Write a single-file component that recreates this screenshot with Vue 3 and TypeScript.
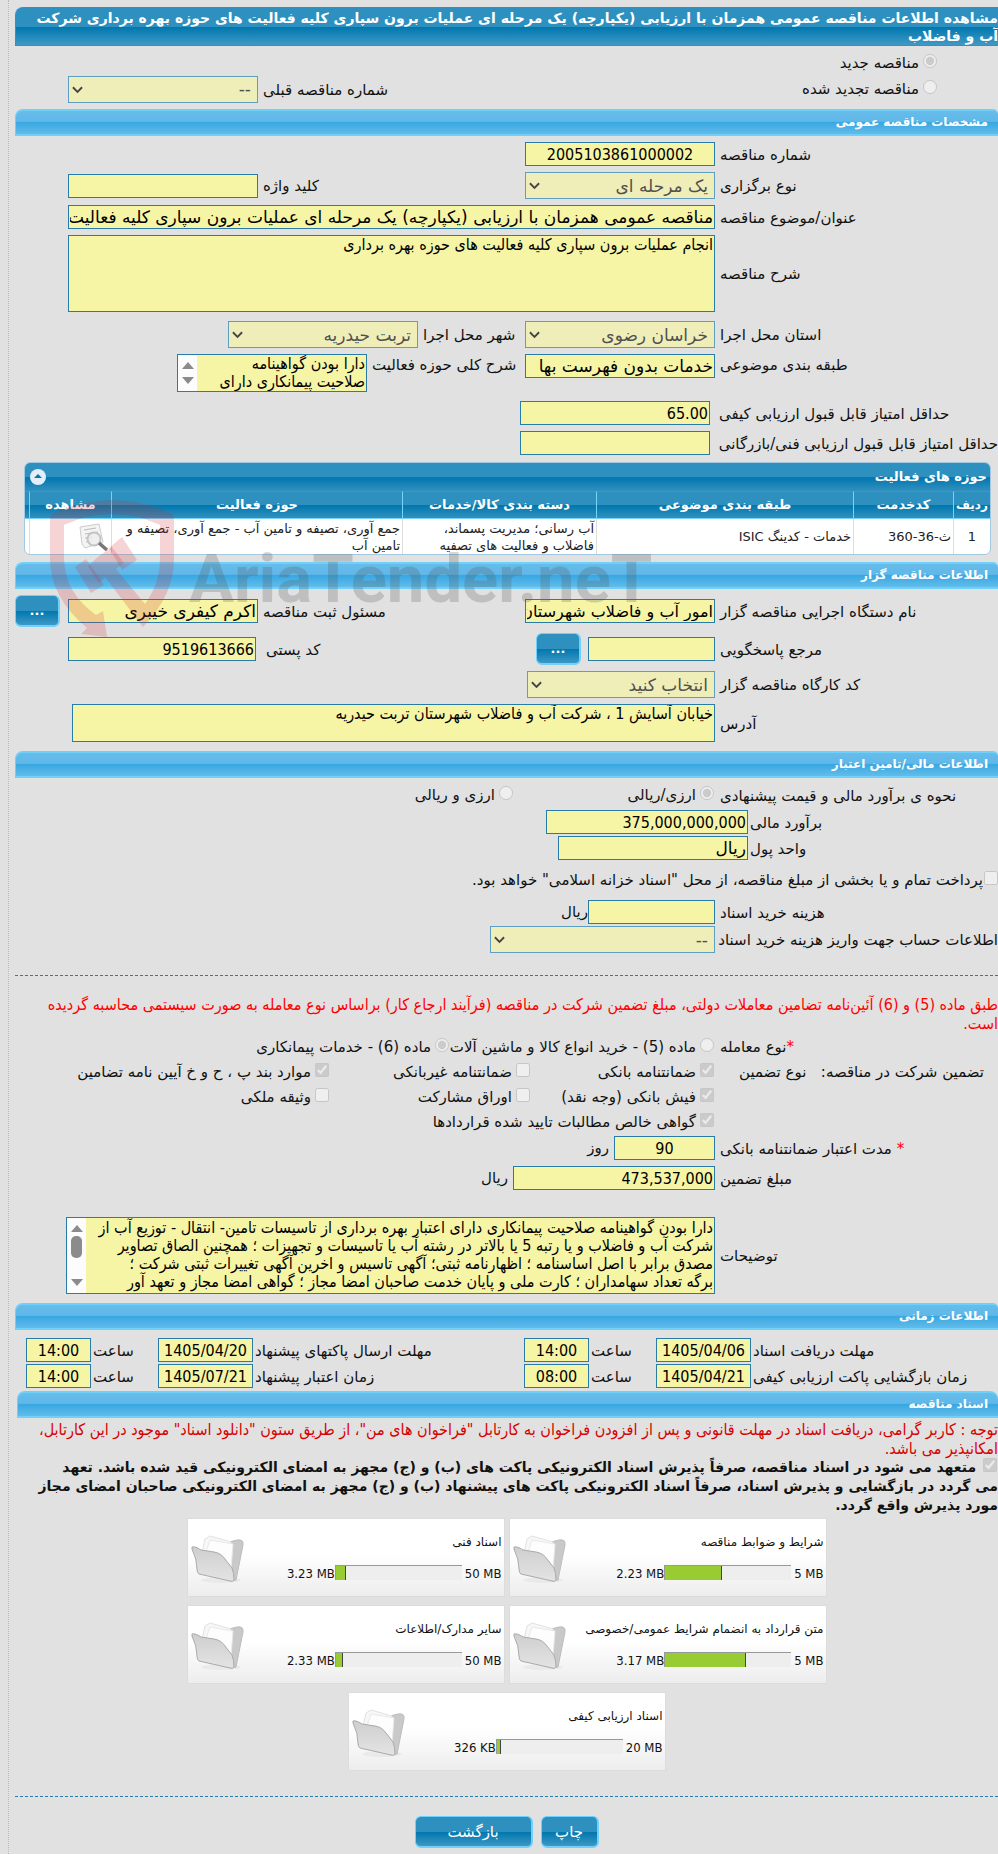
<script setup lang="ts">
interface Doc {
  title: string
  limit: string
  used: string
  percent: number
}

const docs: Doc[] = [
  { title: 'شرایط و ضوابط مناقصه', limit: '5 MB', used: '2.23 MB', percent: 45 },
  { title: 'اسناد فنی', limit: '50 MB', used: '3.23 MB', percent: 8 },
  { title: 'متن قرارداد به انضمام شرایط عمومی/خصوصی', limit: '5 MB', used: '3.17 MB', percent: 64 },
  { title: 'سایر مدارک/اطلاعات', limit: '50 MB', used: '2.33 MB', percent: 6 },
  { title: 'اسناد ارزیابی کیفی', limit: '20 MB', used: '326 KB', percent: 3 },
]

const deadlines = [
  [
    { id: 'd1', label: 'مهلت دریافت اسناد', date: '1405/04/06', time: '14:00' },
    { id: 'd2', label: 'مهلت ارسال پاکتهای پیشنهاد', date: '1405/04/20', time: '14:00' },
  ],
  [
    { id: 'd3', label: 'زمان بازگشایی پاکت ارزیابی کیفی', date: '1405/04/21', time: '08:00' },
    { id: 'd4', label: 'زمان اعتبار پیشنهاد', date: '1405/07/21', time: '14:00' },
  ],
]

const scope = 'دارا بودن گواهینامه\nصلاحیت پیمانکاری دارای'

const remarks = [
  'دارا بودن گواهینامه صلاحیت پیمانکاری دارای اعتبار بهره برداری از تاسیسات تامین- انتقال - توزیع آب از',
  'شرکت آب و فاضلاب و یا رتبه 5 یا بالاتر در رشته آب یا تاسیسات و تجهیزات ؛ همچنین الصاق تصاویر',
  'مصدق برابر با اصل اساسنامه ؛ اظهارنامه ثبتی؛ آگهی تاسیس و اخرین آگهی تغییرات ثبتی شرکت ؛',
  'برگه تعداد سهامداران ؛ کارت ملی و پایان خدمت صاحبان امضا مجاز ؛ گواهی امضا مجاز و تعهد آور',
].join('\n')
</script>

<template>
  <main class="page" dir="rtl" lang="fa">
    <h1 class="bar bar-dark">
      مشاهده اطلاعات مناقصه عمومی همزمان با ارزیابی (یکپارچه) یک مرحله ای عملیات برون سپاری کلیه فعالیت های حوزه بهره برداری شرکت<br />آب و فاضلاب
    </h1>

    <section class="kind">
      <div class="row"><label class="opt"><input type="radio" name="kind" checked disabled />مناقصه جدید</label></div>
      <div class="row">
        <label class="opt kind-opt"><input type="radio" name="kind" disabled />مناقصه تجدید شده</label>
        <label class="lbl grow" for="prev">شماره مناقصه قبلی</label>
        <span class="sel w190"><select id="prev" disabled><option>--</option></select><svg viewBox="0 0 12 8"><path d="M1 1l5 5 5-5" /></svg></span>
      </div>
    </section>

    <h2 class="bar">مشخصات مناقصه عمومی</h2>
    <section class="form">
      <div class="row">
        <label class="lbl main" for="num">شماره مناقصه</label>
        <input id="num" class="w190 center num" value="2005103861000002" readonly />
      </div>
      <div class="row">
        <label class="lbl main" for="hold">نوع برگزاری</label>
        <span class="sel w190"><select id="hold" disabled><option>یک مرحله ای</option></select><svg viewBox="0 0 12 8"><path d="M1 1l5 5 5-5" /></svg></span>
        <label class="lbl grow" for="key">کلید واژه</label>
        <input id="key" class="w190" readonly />
      </div>
      <div class="row">
        <label class="lbl main" for="title">عنوان/موضوع مناقصه</label>
        <input id="title" class="grow" value="مناقصه عمومی همزمان با ارزیابی (یکپارچه) یک مرحله ای عملیات برون سپاری کلیه فعالیت های حوزه بهره برداری" readonly />
      </div>
      <div class="row">
        <label class="lbl main" for="desc">شرح مناقصه</label>
        <textarea id="desc" class="grow tall" readonly>انجام عملیات برون سپاری کلیه فعالیت های حوزه بهره برداری</textarea>
      </div>
      <div class="row apart">
        <label class="lbl main" for="prov">استان محل اجرا</label>
        <span class="sel w190"><select id="prov" disabled><option>خراسان رضوی</option></select><svg viewBox="0 0 12 8"><path d="M1 1l5 5 5-5" /></svg></span>
        <label class="lbl w107" for="city">شهر محل اجرا</label>
        <span class="sel w190"><select id="city" disabled><option>تربت حیدریه</option></select><svg viewBox="0 0 12 8"><path d="M1 1l5 5 5-5" /></svg></span>
      </div>
      <div class="row top">
        <label class="lbl main" for="cat">طبقه بندی موضوعی</label>
        <input id="cat" class="w190" value="خدمات بدون فهرست بها" readonly />
        <label class="lbl w158" for="scope">شرح کلی حوزه فعالیت</label>
        <div class="scroll w190">
          <textarea id="scope" class="short" :value="scope" readonly></textarea>
          <span class="track"><i class="up"></i><i class="down"></i></span>
        </div>
      </div>
      <div class="row apart">
        <label class="lbl wide" for="minq">حداقل امتیاز قابل قبول ارزیابی کیفی</label>
        <input id="minq" class="w190 num" value="65.00" readonly />
      </div>
      <div class="row">
        <label class="lbl wide" for="mint">حداقل امتیاز قابل قبول ارزیابی فنی/بازرگانی</label>
        <input id="mint" class="w190" readonly />
      </div>
    </section>

    <div class="activity">
      <div class="panel">
        <div class="panel-head">
          <span>حوزه های فعالیت</span>
          <button type="button" class="fold" aria-label="بستن"><svg viewBox="0 0 16 16"><path d="M4 9l4-4 4 4z" /></svg></button>
        </div>
        <table>
          <colgroup><col class="c1" /><col class="c2" /><col class="c3" /><col class="c4" /><col class="c5" /><col class="c6" /><col class="c7" /></colgroup>
          <thead>
            <tr><th>ردیف</th><th>کدخدمت</th><th>طبقه بندی موضوعی</th><th>دسته بندی کالا/خدمات</th><th>حوزه فعالیت</th><th>مشاهده</th><th></th></tr>
          </thead>
          <tbody>
            <tr>
              <td class="mid">1</td>
              <td>ث-36-360</td>
              <td>خدمات - کدینگ ISIC</td>
              <td>آب رسانی؛ مدیریت پسماند،<br />فاضلاب و فعالیت های تصفیه</td>
              <td>جمع آوری، تصیفه و تامین آب - جمع آوری، تصیفه و<br />تامین آب</td>
              <td>
                <svg class="view" viewBox="0 0 30 28">
                  <path d="M1 4l19-3 4 18-18 6-3-4z" fill="#f4f4f4" stroke="#ccc" />
                  <path d="M5 7l12-2M6 11l13-2M6 15l8-1M7 19l6-1" stroke="#bbb" fill="none" />
                  <circle cx="15" cy="16" r="6.500" fill="#eee" fill-opacity=".8" stroke="#c4c4c4" stroke-width="2" />
                  <path d="M20 20l8 7" stroke="#777" stroke-width="3.500" />
                </svg>
              </td>
              <td></td>
            </tr>
          </tbody>
        </table>
      </div>
      <svg class="mark" viewBox="0 0 610 146" aria-hidden="true">
        <g fill="#d2282d" fill-opacity=".2">
          <path fill-rule="evenodd" d="M0 16Q62-14 124 16V60Q124 96 93 128L55 78L49 84L38 67L49 57L62 48L74 64L66 70L95 105Q110 84 110 60V26Q62 4 14 26V60Q15 94 46 116L53 112L57 138L31 135L37 129Q0 98 0 60Z" />
          <path d="M25 68L36 60L54 86L41 94ZM59 49L72 38L87 61L72 71Z" />
        </g>
        <text x="139" y="103">AriaTender.neT</text>
      </svg>
    </div>

    <h2 class="bar">اطلاعات مناقصه گزار</h2>
    <section class="form owner">
      <div class="row h32">
        <label class="lbl main" for="org">نام دستگاه اجرایی مناقصه گزار</label>
        <input id="org" class="w190 fit" value="امور آب و فاضلاب شهرستان تربت حیدریه" readonly />
        <label class="lbl grow" for="reg">مسئول ثبت مناقصه</label>
        <input id="reg" class="w190" value="اکرم کیفری خیبری" readonly />
        <button type="button" class="btn dots side">...</button>
      </div>
      <div class="row h32">
        <label class="lbl main" for="ref">مرجع پاسخگویی</label>
        <input id="ref" class="w127" readonly />
        <button type="button" class="btn dots">...</button>
        <label class="lbl grow zip" for="zip">کد پستی</label>
        <input id="zip" class="w188 num" value="9519613666" readonly />
        <span class="side"></span>
      </div>
      <div class="row indent">
        <label class="lbl main" for="work">کد کارگاه مناقصه گزار</label>
        <span class="sel w188"><select id="work" disabled><option>انتخاب کنید</option></select><svg viewBox="0 0 12 8"><path d="M1 1l5 5 5-5" /></svg></span>
      </div>
      <div class="row indent">
        <label class="lbl main" for="addr">آدرس</label>
        <textarea id="addr" class="grow short" readonly>خیابان آسایش 1 ، شرکت آب و فاضلاب شهرستان تربت حیدریه</textarea>
      </div>
    </section>

    <h2 class="bar spaced">اطلاعات مالی/تامین اعتبار</h2>
    <section class="form tight">
      <div class="row h26">
        <span class="lbl main">نحوه ی برآورد مالی و قیمت پیشنهادی</span>
        <label class="opt w201"><input type="radio" name="cur" checked disabled />ارزی/ریالی</label>
        <label class="opt"><input type="radio" name="cur" disabled />ارزی و ریالی</label>
      </div>
      <div class="row">
        <label class="lbl money" for="est">برآورد مالی</label>
        <input id="est" class="w202 num" value="375,000,000,000" readonly />
      </div>
      <div class="row">
        <label class="lbl money" for="unit">واحد پول</label>
        <input id="unit" class="w190" value="ریال" readonly />
      </div>
      <div class="row pay">
        <label class="opt"><input type="checkbox" disabled />پرداخت تمام و یا بخشی از مبلغ مناقصه، از محل "اسناد خزانه اسلامی" خواهد بود.</label>
      </div>
      <div class="row">
        <label class="lbl main" for="cost">هزینه خرید اسناد</label>
        <input id="cost" class="w127" readonly /><span>ریال</span>
      </div>
      <div class="row">
        <label class="lbl main" for="acc">اطلاعات حساب جهت واریز هزینه خرید اسناد</label>
        <span class="sel w225"><select id="acc" disabled><option>--</option></select><svg viewBox="0 0 12 8"><path d="M1 1l5 5 5-5" /></svg></span>
      </div>
    </section>

    <hr />
    <p class="note">
      طبق ماده (5) و (6) آئین‌نامه تضامین معاملات دولتی، مبلغ تضمین شرکت در مناقصه (فرآیند ارجاع کار) براساس نوع معامله به صورت سیستمی محاسبه گردیده<br />است.
    </p>

    <section class="options">
      <div class="row h25">
        <span class="lbl main"><b class="req">*</b>نوع معامله</span>
        <label class="opt w265"><input type="radio" name="deal" disabled />ماده (5) - خرید انواع کالا و ماشین آلات</label>
        <label class="opt"><input type="radio" name="deal" checked disabled />ماده (6) - خدمات پیمانکاری</label>
      </div>
      <div class="row h25">
        <span class="lbl main pair"><span>تضمین شرکت در مناقصه:</span><span>نوع تضمین</span></span>
        <label class="opt w184"><input type="checkbox" checked disabled />ضمانتنامه بانکی</label>
        <label class="opt w201"><input type="checkbox" disabled />ضمانتنامه غیربانکی</label>
        <label class="opt"><input type="checkbox" checked disabled />موارد بند پ ، ح و خ آیین نامه تضامین</label>
      </div>
      <div class="row h25">
        <span class="lbl main"></span>
        <label class="opt w184"><input type="checkbox" checked disabled />فیش بانکی (وجه نقد)</label>
        <label class="opt w201"><input type="checkbox" disabled />اوراق مشارکت</label>
        <label class="opt"><input type="checkbox" disabled />وثیقه ملکی</label>
      </div>
      <div class="row h25">
        <span class="lbl main"></span>
        <label class="opt"><input type="checkbox" checked disabled />گواهی خالص مطالبات تایید شده قراردادها</label>
      </div>
    </section>
    <section class="form guarantee">
      <div class="row">
        <label class="lbl main" for="days"><b class="req">*</b> مدت اعتبار ضمانتنامه بانکی</label>
        <input id="days" class="w101 center num" value="90" readonly /><span class="unit">روز</span>
      </div>
      <div class="row">
        <label class="lbl main" for="sum">مبلغ تضمین</label>
        <input id="sum" class="w202 num" value="473,537,000" readonly /><span class="unit">ریال</span>
      </div>
      <div class="row remarks">
        <label class="lbl main" for="rem">توضیحات</label>
        <div class="scroll grow">
          <textarea id="rem" class="tall" :value="remarks" readonly></textarea>
          <span class="track"><i class="up"></i><i class="thumb"></i><i class="down"></i></span>
        </div>
      </div>
    </section>

    <h2 class="bar spaced">اطلاعات زمانی</h2>
    <section class="times">
      <div v-for="(line, i) in deadlines" :key="i" class="row">
        <template v-for="(d, j) in line" :key="d.id">
          <label class="lbl" :class="j ? 'grow near' : 'date'" :for="d.id">{{ d.label }}</label>
          <input :id="d.id" class="w95 center num" :value="d.date" readonly />
          <label class="lbl hour" :for="d.id + 't'">ساعت</label>
          <input :id="d.id + 't'" class="w65 center num" :value="d.time" readonly />
        </template>
      </div>
    </section>

    <h2 class="bar docs-bar">اسناد مناقصه</h2>
    <p class="note second">
      توجه : کاربر گرامی، دریافت اسناد در مهلت قانونی و پس از افزودن فراخوان به کارتابل "فراخوان های من"، از طریق ستون "دانلود اسناد" موجود در این کارتابل،<br />امکانپذیر می باشد.
    </p>
    <label class="pledge">
      <input type="checkbox" checked disabled />
      متعهد می شود در اسناد مناقصه، صرفاً پذیرش اسناد الکترونیکی پاکت های (ب) و (ج) مجهز به امضای الکترونیکی قید شده باشد. تعهد<br />می گردد در بازگشایی و پذیرش اسناد، صرفاً اسناد الکترونیکی پاکت های پیشنهاد (ب) و (ج) مجهز به امضای الکترونیکی صاحبان امضای مجاز<br />مورد پذیرش واقع گردد.
    </label>

    <section class="cards">
      <article v-for="d in docs" :key="d.title" class="card">
        <h3>{{ d.title }}</h3>
        <div class="usage">
          <span class="limit">{{ d.limit }}</span>
          <span class="meter"><span class="fill" :style="{ width: d.percent + '%' }"></span></span>
          <span class="used">{{ d.used }}</span>
        </div>
        <svg class="folder" viewBox="0 0 54 50">
          <defs>
            <linearGradient id="flap" x1="0" y1="0" x2="0" y2="1"><stop offset="0" stop-color="#cecece" /><stop offset="1" stop-color="#e4e4e4" /></linearGradient>
          </defs>
          <ellipse cx="30" cy="45" rx="20" ry="3" fill="#000" fill-opacity=".04" />
          <path d="M12 14L36 9Q39 6 46 5Q53 4 52 10L45 45L40 46L9 36Z" fill="#c9c9c9" stroke="#bdbdbd" />
          <path d="M11 18L14 4L19 1L40 7L39 35L20 30Z" fill="#f7f7f7" stroke="#e2e2e2" />
          <path d="M15 17L19 5L42 9L40 34L22 28Z" fill="#fdfdfd" stroke="#e9e9e9" />
          <path d="M1 12Q4 11 10 15L23 17Q30 18 34 24L41 33Q43 38 43 45Q42 47 39 46L8 39Q6 38 6 34Q6 24 1 14Z" fill="url(#flap)" stroke="#aaa" />
        </svg>
      </article>
    </section>

    <hr class="last" />
    <footer class="actions">
      <button type="button" class="btn print">چاپ</button>
      <button type="button" class="btn back">بازگشت</button>
    </footer>
  </main>
</template>

<style>
body {
  background: #e1e1e1;
}
</style>

<style scoped>
.page {
  box-sizing: border-box;
  margin-left: 8px;
  padding: 7px 0 6px;
  border-left: 1px dotted #bbb;
  overflow: hidden;
  background: #e1e1e1;
  color: #111;
  font: 15px/18px 'DejaVu Sans', sans-serif;
}
.page * {
  box-sizing: border-box;
}
.bar {
  height: 27px;
  margin: 7px 0 0 6px;
  padding: 0 10px;
  border: solid #6fd0fa;
  border-width: 2px 0 2px 1px;
  border-radius: 8px 5px 0 0;
  background: linear-gradient(#66bcea 0, #60b8e9 45%, #39a7e2 50%, #62bcea 100%);
  color: #fff;
  font-size: 12px;
  font-weight: bold;
  line-height: 23px;
}
.bar.spaced {
  margin-top: 9px;
}
.bar-dark {
  height: auto;
  margin: 0 0 0 6px;
  padding: 1px 0 0;
  border-color: #2f8fd6;
  border-width: 1px 0 1px 1px;
  border-radius: 8px 0 0 0;
  background: linear-gradient(#2e90bf 0, #2e90bf 50%, #0077af 52%, #4099c4 100%);
  font-size: 14px;
  line-height: 18px;
  white-space: nowrap;
}
.bar.docs-bar {
  margin: 3px 0 0 8px;
  border-radius: 8px 8px 0 0;
}
.row {
  display: flex;
  align-items: center;
  white-space: nowrap;
}
.row.top {
  align-items: flex-start;
}
.row.top .lbl {
  padding-top: 2px;
}
.h25 {
  height: 25px;
}
.h26 {
  height: 26px;
}
.h32 {
  height: 32px;
}
.kind {
  padding: 4px 60px 0 59px;
}
.kind .row {
  height: 26px;
}
.form {
  display: flex;
  flex-direction: column;
  gap: 6px;
  padding: 6px 0 0 59px;
}
.form.owner {
  padding-left: 6px;
}
.form .apart {
  margin-top: 3px;
}
.owner .indent {
  padding-left: 57px;
}
.form.tight {
  gap: 2px;
  padding-top: 4px;
}
.tight .pay {
  height: 28px;
  margin: 4px 0;
}
.lbl {
  flex: none;
  padding: 1px 0 0 5px;
  text-align: left;
}
.lbl.main {
  width: 283px;
}
.lbl.wide {
  width: 288px;
  padding-left: 9px;
}
.lbl.money {
  width: 250px;
  padding-left: 2px;
}
.lbl.date {
  width: 247px;
  padding-left: 2px;
}
.lbl.near,
.lbl.hour {
  padding-left: 2px;
}
.lbl.hour {
  width: 67px;
}
.lbl.zip {
  padding-left: 10px;
}
.lbl.pair {
  display: flex;
  justify-content: space-between;
  padding: 0 14px 0 24px;
}
.grow {
  flex: 1;
  min-width: 0;
}
.w65 { width: 65px; }
.w95 { width: 95px; }
.w101 { width: 101px; }
.w107 { width: 107px; }
.w127 { width: 127px; }
.w158 { width: 158px; }
.w184 { width: 184px; }
.w188 { width: 188px; }
.w190 { width: 190px; }
.w201 { width: 201px; }
.w202 { width: 202px; }
.w225 { width: 225px; }
.w265 { width: 265px; }
.opt {
  display: flex;
  flex: none;
  align-items: center;
}
.kind-opt {
  width: 200px;
}
input[type='radio'],
input[type='checkbox'] {
  flex: none;
  width: 14px;
  height: 14px;
  margin: 0 1px 4px 4px;
}
.pay input[type='checkbox'] {
  margin: 0 0 4px 1px;
}
input:not([type]),
textarea,
select {
  height: 24px;
  margin: 0;
  border: 1px solid #2a7ca8;
  border-radius: 0;
  outline: 0;
  background: #f6f4a5;
  color: #000;
  font: 17px/20px 'DejaVu Sans', sans-serif;
}
input:not([type]) {
  padding: 0 1px;
}
input.fit:not([type]) {
  font-size: 16px;
}
input.num:not([type]) {
  padding-top: 1px;
  font-family: 'DejaVu Sans Condensed', 'DejaVu Sans', sans-serif;
  font-size: 16px;
}
input.center {
  text-align: center;
}
textarea {
  display: block;
  padding: 0 1px;
  overflow: hidden;
  resize: none;
  font: 16px/18px 'DejaVu Sans Condensed', 'DejaVu Sans', sans-serif;
  white-space: pre;
}
textarea.tall {
  height: 77px;
}
textarea.short {
  height: 38px;
}
.scroll {
  display: flex;
  border: 1px solid #2a7ca8;
}
.scroll textarea {
  flex: 1;
  min-width: 0;
  border: 0;
}
.scroll .tall {
  height: 75px;
  padding-top: 1px;
}
.scroll .short {
  height: 36px;
}
.track {
  display: flex;
  flex: 0 0 19px;
  flex-direction: column;
  align-items: center;
  justify-content: space-between;
  padding: 7px 0;
  background: #fcfcfc;
}
.up,
.down {
  border: 6px solid transparent;
}
.up {
  border-top: 0;
  border-bottom: 7px solid #8b8b8b;
}
.down {
  border-bottom: 0;
  border-top: 7px solid #8b8b8b;
}
.thumb {
  width: 11px;
  height: 22px;
  margin-bottom: 18px;
  border-radius: 5px;
  background: #8b8b8b;
}
.sel {
  display: flex;
  position: relative;
}
.sel select {
  width: 100%;
  height: 27px;
  padding: 0 6px;
  border-color: #5c9fc0;
  appearance: none;
  background: #efedb8;
  color: #505050;
  opacity: 1;
}
.sel svg {
  position: absolute;
  left: 4px;
  top: 10px;
  width: 11px;
  height: 8px;
  fill: none;
  stroke: #444;
  stroke-width: 2;
}
.activity {
  position: relative;
  padding: 7px 7px 0 15px;
}
.panel {
  overflow: hidden;
  border: 1px solid #a3c9e2;
  border-radius: 6px;
  background: #fff;
}
.panel-head {
  display: flex;
  align-items: center;
  justify-content: space-between;
  height: 28px;
  padding: 0 3px 0 5px;
  background: linear-gradient(#2e90bf 0, #2e90bf 50%, #0077af 52%, #3390be 100%);
  color: #fff;
  font-size: 13px;
  font-weight: bold;
}
.fold {
  width: 16px;
  height: 16px;
  padding: 0;
  border: 0;
  border-radius: 8px;
  background: #e3eefa;
}
.fold svg {
  display: block;
  fill: #0077af;
}
table {
  width: 100%;
  border-collapse: separate;
  border-spacing: 0;
  table-layout: fixed;
}
.c1 { width: 37px; }
.c2 { width: 100px; }
.c3 { width: 257px; }
.c4 { width: 194px; }
.c6 { width: 82px; }
.c7 { width: 4px; }
th {
  height: 28px;
  padding: 0;
  border-left: 1px solid #75d2f8;
  border-top: 1px solid #3c97cf;
  border-bottom: 1px solid #75d2f8;
  background: linear-gradient(#2e90bf 0, #2e90bf 50%, #0077af 52%, #3390be 100%);
  color: #fff;
  font-size: 13px;
  white-space: nowrap;
}
th:first-child {
  font-size: 12px;
}
td {
  height: 35px;
  padding: 0 2px;
  border-left: 1px solid #ddd;
  color: #222;
  font-size: 13px;
  line-height: 17px;
  white-space: nowrap;
}
th:last-child,
td:last-child {
  border-left: 0;
  padding: 0;
}
td.mid {
  text-align: center;
}
.view {
  display: block;
  width: 30px;
  height: 28px;
}
.mark {
  position: absolute;
  z-index: 2;
  left: 41px;
  top: 44px;
  width: 610px;
  height: 146px;
  overflow: visible;
  direction: ltr;
  pointer-events: none;
}
.mark text {
  fill: #555;
  fill-opacity: 0.24;
  font: bold 67px Roboto, sans-serif;
}
.btn {
  height: 32px;
  padding: 0;
  border: 1px solid #6fd0fa;
  border-width: 1px 2px 2px 1px;
  border-radius: 6px;
  background: linear-gradient(#2e90bf 0, #2e90bf 50%, #0077af 52%, #3e98c4 100%);
  color: #fff;
  font: 15px/20px 'DejaVu Sans', sans-serif;
}
.dots {
  flex: none;
  width: 45px;
  margin-right: 7px;
  font-size: 13px;
  font-weight: bold;
}
.side {
  flex: none;
  width: 45px;
  margin-right: 8px;
}
hr {
  height: 0;
  margin: 22px 0 0 6px;
  border: 0;
  border-top: 1px dashed #2a7ca8;
}
hr.last {
  margin-top: 25px;
}
.note {
  margin: 19px 0 0;
  color: #f00;
  font: 16px/19px 'DejaVu Sans Condensed', 'DejaVu Sans', sans-serif;
  white-space: nowrap;
}
.note.second {
  margin-top: 2px;
  color: #d80000;
}
.options {
  padding-top: 1px;
}
.req {
  color: #f00;
  font-weight: normal;
}
.form.guarantee {
  padding: 2px 0 0 57px;
}
.unit {
  padding-right: 5px;
}
.form .remarks {
  margin-top: 21px;
}
.times {
  display: flex;
  flex-direction: column;
  gap: 2px;
  padding: 8px 0 0 17px;
}
.pledge {
  display: block;
  font-size: 14px;
  font-weight: bold;
  line-height: 19px;
  white-space: nowrap;
}
.pledge input[type='checkbox'] {
  margin: 0 1px 0 2px;
  vertical-align: 0;
}
.cards {
  display: flex;
  flex-wrap: wrap;
  justify-content: center;
  gap: 8px 4px;
  padding: 3px 100px 0 106px;
}
.card {
  position: relative;
  width: 318px;
  height: 79px;
  padding: 14px 2px 0;
  border: 1px solid #dcdcdc;
  background: linear-gradient(#fff 0, #fff 45%, #ededed 100%);
}
.card h3 {
  margin: 0;
  font-size: 12px;
  font-weight: normal;
  line-height: 18px;
}
.usage {
  display: flex;
  margin-top: 14px;
  font: 13px/18px 'DejaVu Sans Condensed', 'DejaVu Sans', sans-serif;
}
.limit {
  padding-left: 3px;
}
.limit,
.used {
  direction: ltr;
}
.meter {
  display: flex;
  direction: ltr;
  width: 127px;
  height: 15px;
  border-top: 1px solid #999;
  border-left: 1px solid #999;
  background: #eee;
}
.fill {
  border-right: 1px solid #444;
  background: #9c3;
}
.folder {
  position: absolute;
  left: 3px;
  top: 16px;
  width: 54px;
  height: 50px;
}
.actions {
  display: flex;
  justify-content: center;
  gap: 8px;
  padding: 19px 0 0 6px;
}
.print {
  width: 58px;
}
.back {
  width: 118px;
}
</style>
